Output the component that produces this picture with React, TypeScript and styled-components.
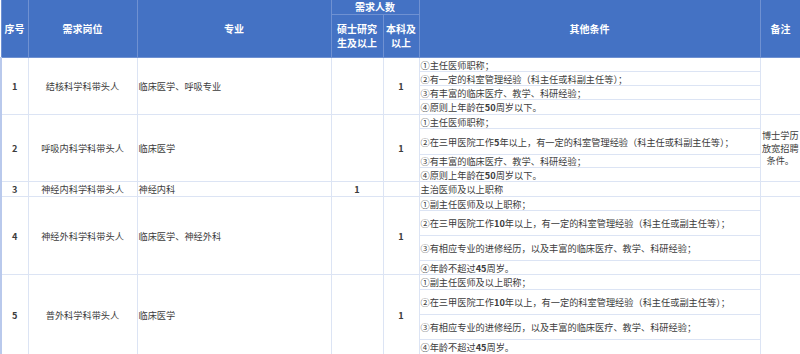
import React from "react";
import styled, { createGlobalStyle } from "styled-components";

const Global = createGlobalStyle`
  html, body { margin: 0; padding: 0; background: #ffffff; }
  body { font-family: "Noto Sans CJK SC", "Noto Sans", sans-serif; }
`;

const Table = styled.table`
  width: 800px;
  table-layout: fixed;
  border-collapse: collapse;
  font-family: "Noto Sans CJK SC", "Noto Sans", sans-serif;
  color: #3c3c3c;
  font-size: 9.2px;
  line-height: 12px;
`;

const HeadCell = styled.th`
  background: #4472c4;
  color: #ffffff;
  font-weight: 700;
  font-size: 10px;
  line-height: 14px;
  padding: 0;
  text-align: center;
  vertical-align: middle;
  border: 1px solid #6f91d2;
  border-top: none;
`;

const HeadRow = styled.tr<{ $h: number }>`
  height: ${(p) => p.$h}px;
`;

const BodyRow = styled.tr<{ $h: number }>`
  height: ${(p) => p.$h}px;
`;

const Cell = styled.td<{ $align?: "left" | "center"; $bold?: boolean }>`
  padding: 0 1px;
  text-align: ${(p) => p.$align || "center"};
  vertical-align: middle;
  border: 1px solid #dce4f4;
  font-weight: ${(p) => (p.$bold ? 700 : 400)};
  white-space: nowrap;
  overflow: hidden;
  &:first-child { border-left: 2px solid #b9c9ec; }
`;

const NoteCell = styled.td`
  padding: 0;
  text-align: center;
  vertical-align: middle;
  border: 1px solid #dce4f4;
  border-right: 2px solid #c4d2ef;
  line-height: 12.5px;
  word-break: break-all;
`;

const CondCell = styled.td`
  padding: 0 1px;
  text-align: left;
  vertical-align: middle;
  border: 1px solid #dce4f4;
  white-space: nowrap;
  overflow: hidden;
`;

const Num = styled.span`
  font-weight: 700;
`;

type Row = {
  no: string;
  pos: string;
  major: string;
  master: string;
  bach: string;
  conds: [number, string][];
  note: string;
};

const rows: Row[] = [
  {
    no: "1",
    pos: "结核科学科带头人",
    major: "临床医学、呼吸专业",
    master: "",
    bach: "1",
    conds: [
      [14, "①主任医师职称；"],
      [14, "②有一定的科室管理经验（科主任或科副主任等）；"],
      [14, "③有丰富的临床医疗、教学、科研经验；"],
      [15, "④原则上年龄在50周岁以下。"],
    ],
    note: "",
  },
  {
    no: "2",
    pos: "呼吸内科学科带头人",
    major: "临床医学",
    master: "",
    bach: "1",
    conds: [
      [14, "①主任医师职称；"],
      [26, "②在三甲医院工作5年以上，有一定的科室管理经验（科主任或科副主任等）；"],
      [13, "③有丰富的临床医疗、教学、科研经验；"],
      [14, "④原则上年龄在50周岁以下。"],
    ],
    note: "博士学历放宽招聘条件。",
  },
  {
    no: "3",
    pos: "神经内科学科带头人",
    major: "神经内科",
    master: "1",
    bach: "",
    conds: [[15, "主治医师及以上职称"]],
    note: "",
  },
  {
    no: "4",
    pos: "神经外科学科带头人",
    major: "临床医学、神经外科",
    master: "",
    bach: "1",
    conds: [
      [14, "①副主任医师及以上职称；"],
      [25, "②在三甲医院工作10年以上，有一定的科室管理经验（科主任或副主任等）；"],
      [25, "③有相应专业的进修经历，以及丰富的临床医疗、教学、科研经验；"],
      [14, "④年龄不超过45周岁。"],
    ],
    note: "",
  },
  {
    no: "5",
    pos: "普外科学科带头人",
    major: "临床医学",
    master: "",
    bach: "1",
    conds: [
      [15, "①副主任医师及以上职称；"],
      [25, "②在三甲医院工作10年以上，有一定的科室管理经验（科主任或副主任等）；"],
      [25, "③有相应专业的进修经历，以及丰富的临床医疗、教学、科研经验；"],
      [15, "④年龄不超过45周岁。"],
    ],
    note: "",
  },
];

function withNums(text: string) {
  const parts = text.split(/(\d+)/);
  return parts.map((p, i) => (/^\d+$/.test(p) ? <Num key={i}>{p}</Num> : <React.Fragment key={i}>{p}</React.Fragment>));
}

export default function App() {
  return (
    <>
      <Global />
      <Table>
        <colgroup>
          <col style={{ width: 27 }} />
          <col style={{ width: 109 }} />
          <col style={{ width: 194 }} />
          <col style={{ width: 52 }} />
          <col style={{ width: 36 }} />
          <col style={{ width: 341 }} />
          <col style={{ width: 41 }} />
        </colgroup>
        <thead>
          <HeadRow $h={14}>
            <HeadCell rowSpan={2}>序号</HeadCell>
            <HeadCell rowSpan={2}>需求岗位</HeadCell>
            <HeadCell rowSpan={2}>专业</HeadCell>
            <HeadCell colSpan={2}>需求人数</HeadCell>
            <HeadCell rowSpan={2}>其他条件</HeadCell>
            <HeadCell rowSpan={2}>备注</HeadCell>
          </HeadRow>
          <HeadRow $h={43}>
            <HeadCell>
              硕士研究
              <br />
              生及以上
            </HeadCell>
            <HeadCell>
              本科及
              <br />
              以上
            </HeadCell>
          </HeadRow>
        </thead>
        <tbody>
          {rows.map((r) =>
            r.conds.map(([h, text], i) => (
              <BodyRow key={r.no + "-" + i} $h={h}>
                {i === 0 && (
                  <>
                    <Cell rowSpan={r.conds.length} $bold>
                      {r.no}
                    </Cell>
                    <Cell rowSpan={r.conds.length}>{r.pos}</Cell>
                    <Cell rowSpan={r.conds.length} $align="left">
                      {r.major}
                    </Cell>
                    <Cell rowSpan={r.conds.length} $bold>
                      {r.master}
                    </Cell>
                    <Cell rowSpan={r.conds.length} $bold>
                      {r.bach}
                    </Cell>
                  </>
                )}
                <CondCell>{withNums(text)}</CondCell>
                {i === 0 && <NoteCell rowSpan={r.conds.length}>{r.note}</NoteCell>}
              </BodyRow>
            ))
          )}
        </tbody>
      </Table>
    </>
  );
}
